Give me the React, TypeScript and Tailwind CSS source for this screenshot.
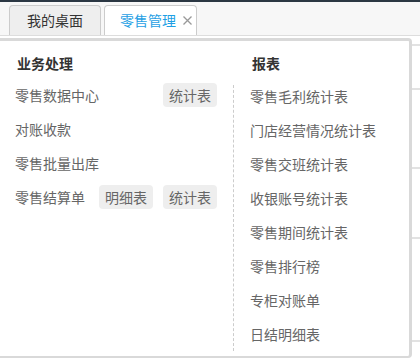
// Tab bar with an open "零售管理" dropdown menu
const leftItems: { label: string; chips: string[] }[] = [
  { label: '零售数据中心', chips: ['统计表'] },
  { label: '对账收款', chips: [] },
  { label: '零售批量出库', chips: [] },
  { label: '零售结算单', chips: ['明细表', '统计表'] },
];

const rightItems = [
  '零售毛利统计表',
  '门店经营情况统计表',
  '零售交班统计表',
  '收银账号统计表',
  '零售期间统计表',
  '零售排行榜',
  '专柜对账单',
  '日结明细表',
];

const bgRows = [10, 44, 79, 70, 103];

const App = () => {
  return (
    <div
      className="relative w-[420px] h-[358px] overflow-hidden bg-white"
      style={{ fontFamily: '"Noto Sans CJK SC", "Noto Sans", sans-serif' }}
    >
      <div className="h-[2px] bg-[#2b3743]" />

      {/* tab bar */}
      <div className="h-[34px] bg-[#f7f7f7] border-b border-[#dddddd] flex items-end pl-[9px]">
        <div className="w-[92px] h-[30px] border border-b-0 border-[#cccccc] rounded-t-[4px] bg-[#eeeeee] flex items-center justify-center text-[14px] text-[#333333]">
          我的桌面
        </div>
        <div className="ml-[3px] w-[93px] h-[30px] border border-b-0 border-[#cccccc] rounded-t-[4px] bg-white flex items-center pl-[15px] text-[14px] text-[#1f9fe4]">
          零售管理
          <svg className="ml-[7px] w-[9px] h-[9px]" viewBox="0 0 9 9" fill="none" stroke="#999999" strokeWidth="1.3">
            <path d="M0.5 0.5l8 8M8.5 0.5l-8 8" />
          </svg>
        </div>
      </div>

      {/* page content behind the menu */}
      <div>
        {bgRows.map((h, i) => (
          <div key={i} className="border-b-[2px] border-[#e2e2e2]" style={{ height: h }} />
        ))}
      </div>

      {/* dropdown panel */}
      <div className="absolute top-[38px] left-0 w-[412px] h-[320px] bg-white border-t-[3px] border-r-[3px] border-b-[2px] border-[#d9d9d9] rounded-tr-[4px] rounded-br-[4px] flex">
        <div className="w-[233px] pl-[15px] pr-[16px] pt-[12px]">
          <div className="pl-[2px] h-[20px] leading-[20px] text-[14px] font-bold text-[#333333]">业务处理</div>
          <div className="mt-[11px] flex flex-col gap-[12px]">
            {leftItems.map(item => (
              <div key={item.label} className="h-[22px] flex items-center text-[14px] text-[#666666]">
                <span className="flex-1">{item.label}</span>
                <div className="flex gap-[10px]">
                  {item.chips.map(c => (
                    <span
                      key={c}
                      className="w-[54px] h-[24px] rounded-[4px] bg-[#eeeeee] flex items-center justify-center text-[14px] text-[#666666]"
                    >
                      {c}
                    </span>
                  ))}
                </div>
              </div>
            ))}
          </div>
        </div>

        <div className="flex-1 pt-[12px]">
          <div className="pl-[19px] h-[20px] leading-[20px] text-[14px] font-bold text-[#333333]">报表</div>
          <div className="mt-[12px] border-l border-dashed border-[#cccccc] pl-[16px] pb-[6px] flex flex-col gap-[12px]">
            {rightItems.map(r => (
              <div key={r} className="h-[22px] leading-[22px] text-[14px] text-[#666666]">
                {r}
              </div>
            ))}
          </div>
        </div>
      </div>
    </div>
  );
};

export default App;
